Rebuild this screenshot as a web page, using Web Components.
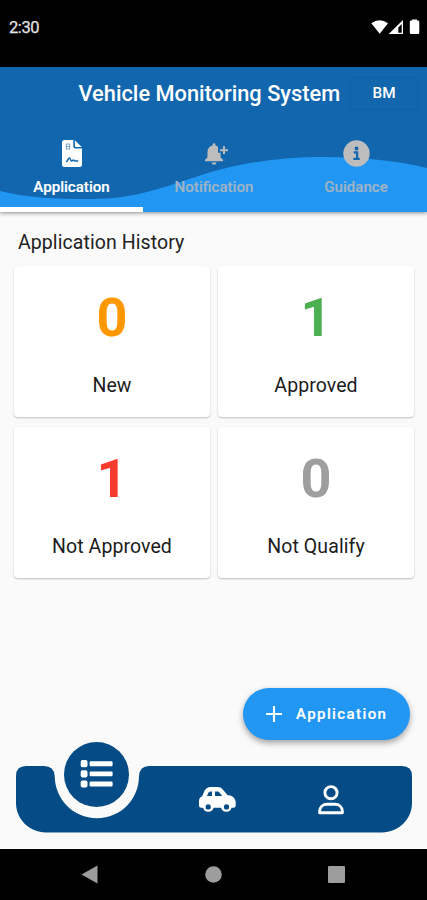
<!DOCTYPE html>
<html lang="en">
<head>
<meta charset="utf-8">
<meta name="viewport" content="width=device-width, initial-scale=1">
<title>Vehicle Monitoring System</title>
<style>
  html, body {
    margin: 0;
    height: 100%;
  }

  body {
    background: #fafafa;
    font-family: Roboto, sans-serif;
    overflow: hidden;
  }
</style>
</head>
<body>
<vms-app></vms-app>

<script>
const ICONS = {
  file: `<svg width="20" height="27" viewBox="0 0 20 27">
    <path fill="currentColor" fill-rule="evenodd" d="M2.5 0H11.3V6.6Q11.3 8.6 13.3 8.6H20V24.5Q20 27 17.5 27H2.5Q0 27 0 24.5V2.5Q0 0 2.5 0ZM12.9 0.3L19.7 7.1H13.9Q12.9 7.1 12.9 6.1Z"/>
    <path fill="none" stroke="#1166ae" stroke-opacity=".55" stroke-width="1" d="M4 4H8M4 6.5H8M4 9H8M4.3 4V9M7.7 4V9"/>
    <path fill="none" stroke="#1166ae" stroke-width="1.5" d="M4 21.7C6 21.5 6 18 7.4 18C8.8 18 8.3 21.3 9.7 21.1C10.9 20.9 11.2 19.5 12 20.2C12.8 21.2 14.2 21.1 16.3 21.1"/>
  </svg>`,
  bell: `<svg width="27" height="27" viewBox="-4 -2.6 27 27">
    <g transform="scale(.95 .91)">
      <path fill="currentColor" d="M8 2.2Q8 .8 9.5 .8T11 2.2V3.2C12.2 3.5 13 4 13.7 4.7V11.2H16.4V16.3L19 18.9V20.6H0V18.9L2.6 16.3V10.3C2.6 6.6 4.7 3.9 8 3.2ZM6.9 21.8H12.1Q11.7 24.4 9.5 24.4T6.9 21.8Z"/>
      <path fill="none" stroke="currentColor" stroke-width="2.2" d="M20 4.1V12.5M15.7 8.3H24.2"/>
    </g>
  </svg>`,
  info: `<svg width="27" height="27" viewBox="0 0 27 27">
    <circle cx="13.5" cy="13.5" r="13.2" fill="currentColor"/>
    <circle cx="13.5" cy="8.5" r="1.9" fill="#1166ae"/>
    <path fill="none" stroke="#1166ae" stroke-width="2.2" d="M10.8 12.3H14.1V18.8M10.4 18.9H16.7"/>
  </svg>`,
  plus: `<svg width="16" height="16" viewBox="0 0 16 16">
    <path stroke="currentColor" stroke-width="2.1" d="M8 0V16M0 8H16"/>
  </svg>`,
  list: `<svg width="33" height="28" viewBox="0 0 33 28">
    <g fill="currentColor">
      <rect x="0.7" y="0" width="6.8" height="7.2" rx="1.8"/>
      <rect x="0.7" y="10.2" width="6.8" height="7.2" rx="1.8"/>
      <rect x="0.7" y="20.4" width="6.8" height="7.2" rx="1.8"/>
      <rect x="9.6" y="1.3" width="23" height="4.9" rx="1.2"/>
      <rect x="9.6" y="11.4" width="23" height="4.9" rx="1.2"/>
      <rect x="9.6" y="21.5" width="23" height="4.9" rx="1.2"/>
    </g>
  </svg>`,
  car: `<svg width="37" height="26" viewBox="0 0 37 26">
    <path fill="currentColor" fill-rule="evenodd" d="M12 0H18.5Q21.8 0 23.6 2.2L28.6 8.2H29.5C33.8 8.6 36.7 11.8 36.7 15.2V18.7Q36.7 20.8 34.5 20.8H32.6A5.5 5.5 0 0 1 22 20.8H14.6A5.5 5.5 0 0 1 4 20.8H2.2Q0 20.8 0 18.7V14Q0 10.4 3.2 9.3L5.5 3.8Q7.3 0 12 0ZM8 9H13V4.5H11.4Q9.9 4.5 9.2 6ZM16 4.5V9H23.2L20 4.9Q19.6 4.5 19.1 4.5Z"/>
    <circle cx="9.2" cy="19.9" r="2.6" fill="#054c86"/>
    <circle cx="27.5" cy="19.9" r="2.6" fill="#054c86"/>
  </svg>`,
  person: `<svg width="26" height="30" viewBox="0 0 26 30">
    <g fill="none" stroke="currentColor" stroke-width="2.9">
      <circle cx="13" cy="7.7" r="6.1"/>
      <path stroke-linejoin="round" d="M1.6 27.7V26.4C1.6 22 5 19.3 9 19.3H17C21 19.3 24.4 22 24.4 26.4V27.7Z"/>
    </g>
  </svg>`
};

class VmsIcon extends HTMLElement {
  constructor() {
    super();
    this.attachShadow({ mode: 'open' });
  }

  connectedCallback() {
    this.shadowRoot.innerHTML = `
      <style>
        :host { display: inline-flex; }
        svg { display: block; }
      </style>
      ${ICONS[this.getAttribute('name')] || ''}
    `;
  }
}

class StatusBar extends HTMLElement {
  constructor() {
    super();
    this.attachShadow({ mode: 'open' });
    this.shadowRoot.innerHTML = `
      <style>
        :host {
          display: flex;
          justify-content: space-between;
          box-sizing: border-box;
          height: 67px;
          padding: 18px 6px 0 9px;
          background: #000;
          color: #e4e4e4;
          font-size: 16.5px;
          line-height: 20px;
          letter-spacing: -0.4px;
          -webkit-text-stroke: 0.25px #e4e4e4;
        }
        svg { display: block; margin-top: 1px; }
      </style>
      <slot></slot>
      <svg width="50" height="17" viewBox="0 0 50 17">
        <path fill="#fff" d="M0.3 4.3Q8.5 -2 17 4.3L8.7 14.8Z"/>
        <path fill="#fff" fill-rule="evenodd" d="M32 1V15H17.7ZM30.7 5L27.3 8.4V13.7H30.7Z"/>
        <path fill="#fff" d="M41 1.6V0.6H46V1.6H47Q48.3 1.6 48.3 3V13.5Q48.3 15 47 15H40.2Q38.8 15 38.8 13.5V3Q38.8 1.6 40.2 1.6Z"/>
      </svg>
    `;
  }
}

class AppHeader extends HTMLElement {
  constructor() {
    super();
    this.attachShadow({ mode: 'open' });
    this.shadowRoot.innerHTML = `
      <style>
        :host {
          display: grid;
          height: 145px;
          background: #2196f3;
          box-shadow: 0 1px 4px rgba(0, 0, 0, 0.45);
        }
        .wave, .content { grid-area: 1 / 1; }
        .wave { display: block; }
        .content {
          display: flex;
          flex-direction: column;
          justify-content: space-between;
          min-width: 0;
        }
        .bar {
          display: grid;
          grid-template-columns: 350px 68px;
          align-items: center;
          height: 52px;
        }
        .title {
          padding: 1px 0 0 78.5px;
          color: #fff;
          font-size: 21.8px;
          font-weight: 500;
          white-space: nowrap;
        }
        .user {
          box-sizing: border-box;
          height: 33px;
          border: 1px solid #0e60a5;
          border-radius: 3px;
          color: #fff;
          font-size: 15.3px;
          font-weight: 500;
          line-height: 31px;
          text-align: center;
        }
        .tabs {
          display: grid;
          grid-template-columns: 143px 142px 142px;
          height: 79px;
        }
      </style>
      <svg class="wave" width="427" height="145" viewBox="0 0 427 145">
        <path fill="#1166ae" d="M0 0H427V101C398 94 365 90 325 90C282 90 247 95 211 105C166 119 137 132 92 132C57 132 27 131 0 124Z"/>
      </svg>
      <div class="content">
        <div class="bar">
          <div class="title"><slot name="title"></slot></div>
          <div class="user"><slot name="user"></slot></div>
        </div>
        <div class="tabs"><slot></slot></div>
      </div>
    `;
  }
}

class HeaderTab extends HTMLElement {
  constructor() {
    super();
    this.attachShadow({ mode: 'open' });
  }

  connectedCallback() {
    this.shadowRoot.innerHTML = `
      <style>
        :host {
          display: flex;
          flex-direction: column;
          align-items: center;
          box-sizing: border-box;
          padding-top: 7px;
          border-bottom: 5px solid transparent;
          color: #bdbdbd;
          font-size: 15.1px;
          font-weight: 500;
          line-height: 18px;
        }
        :host([active]) {
          border-color: #fff;
          color: #fff;
        }
        .label {
          margin-top: 11px;
          -webkit-text-stroke: 0.2px currentColor;
        }
        :host(:not([active])) .label { color: #9fb3c6; }
      </style>
      <vms-icon name="${this.getAttribute('icon')}"></vms-icon>
      <div class="label"><slot></slot></div>
    `;
  }
}

class StatCard extends HTMLElement {
  constructor() {
    super();
    this.attachShadow({ mode: 'open' });
  }

  connectedCallback() {
    this.shadowRoot.innerHTML = `
      <style>
        :host {
          display: flex;
          flex-direction: column;
          align-items: center;
          box-sizing: border-box;
          padding-top: 21px;
          border-radius: 4px;
          background: #fff;
          box-shadow: 0 1px 2px rgba(0, 0, 0, 0.24);
        }
        .value {
          color: ${this.getAttribute('color')};
          font-size: 54px;
          font-weight: 700;
          line-height: 62px;
        }
        .label {
          margin-top: 25px;
          color: #1c1c1c;
          font-size: 19.5px;
          line-height: 24px;
          letter-spacing: 0.08px;
        }
      </style>
      <div class="value">${this.getAttribute('value')}</div>
      <div class="label"><slot></slot></div>
    `;
  }
}

class FloatingButton extends HTMLElement {
  constructor() {
    super();
    this.attachShadow({ mode: 'open' });
    this.shadowRoot.innerHTML = `
      <style>
        :host {
          display: flex;
          align-items: center;
          gap: 14.5px;
          box-sizing: border-box;
          width: 167px;
          height: 52px;
          padding-left: 22.5px;
          border-radius: 26px;
          background: #2196f3;
          box-shadow: 0 3px 6px rgba(0, 0, 0, 0.36);
          color: #fff;
          font-size: 15px;
          font-weight: 500;
          letter-spacing: 1.4px;
          -webkit-text-stroke: 0.2px #fff;
        }
      </style>
      <vms-icon name="plus"></vms-icon>
      <slot></slot>
    `;
  }
}

class BottomNav extends HTMLElement {
  constructor() {
    super();
    this.attachShadow({ mode: 'open' });
    this.shadowRoot.innerHTML = `
      <style>
        :host {
          display: grid;
          width: 396px;
          height: 91px;
          color: #fff;
        }
        .shape, .items { grid-area: 1 / 1; }
        .shape { display: block; }
        .items {
          display: grid;
          grid-template-columns: 144.5px 114px 114px;
          justify-items: center;
        }
        .active {
          display: flex;
          align-items: center;
          justify-content: center;
          box-sizing: border-box;
          width: 65px;
          height: 65px;
          margin-left: 17px;
          padding-bottom: 1px;
          border-radius: 50%;
          background: #054c86;
        }
        .car { margin-top: 45px; }
        .person { margin: 43px 1px 0 0; }
      </style>
      <svg class="shape" width="396" height="91" viewBox="0 0 396 91">
        <path fill="#054c86" d="M0 34Q0 24 10 24H28Q38 24 38.7 34C39 57 57 76.2 81 76.2S123 57 123 34Q123.7 24 133 24H386Q396 24 396 34V61C396 77 383 90.4 366 90.4H30C13 90.4 0 77 0 61Z"/>
      </svg>
      <div class="items">
        <div class="active"><vms-icon name="list"></vms-icon></div>
        <vms-icon class="car" name="car"></vms-icon>
        <vms-icon class="person" name="person"></vms-icon>
      </div>
    `;
  }
}

class SystemBar extends HTMLElement {
  constructor() {
    super();
    this.attachShadow({ mode: 'open' });
    this.shadowRoot.innerHTML = `
      <style>
        :host {
          display: flex;
          align-items: center;
          justify-content: space-between;
          box-sizing: border-box;
          height: 51px;
          padding: 0 82px 0 81px;
          background: #000;
        }
      </style>
      <svg width="17" height="19"><path fill="#9d9d9d" d="M0.5 9.5L16.5 0.5V18.5Z"/></svg>
      <svg width="17" height="17"><circle cx="8.5" cy="8.5" r="8.3" fill="#9d9d9d"/></svg>
      <svg width="17" height="17"><rect width="17" height="17" rx="1" fill="#9d9d9d"/></svg>
    `;
  }
}

class VmsApp extends HTMLElement {
  constructor() {
    super();
    this.attachShadow({ mode: 'open' });
    this.shadowRoot.innerHTML = `
      <style>
        :host {
          display: flex;
          flex-direction: column;
          width: 427px;
          height: 900px;
          background: #fafafa;
        }
        main {
          display: flex;
          flex: 1;
          flex-direction: column;
          padding: 18px 13px 16px 14px;
        }
        h2 {
          margin: 0 0 11px 4px;
          color: #222;
          font-size: 19.5px;
          font-weight: 400;
          line-height: 25px;
          letter-spacing: 0.08px;
        }
        .cards {
          display: grid;
          grid-template-columns: 196px 196px;
          grid-auto-rows: 150.5px;
          gap: 10.5px 8px;
        }
        floating-button {
          align-self: flex-end;
          margin: auto 4px 2px 0;
        }
        bottom-nav { margin-left: 2px; }
      </style>
      <status-bar>2:30</status-bar>
      <app-header>
        <span slot="title">Vehicle Monitoring System</span>
        <span slot="user">BM</span>
        <header-tab icon="file" active>Application</header-tab>
        <header-tab icon="bell">Notification</header-tab>
        <header-tab icon="info">Guidance</header-tab>
      </app-header>
      <main>
        <h2>Application History</h2>
        <div class="cards">
          <stat-card value="0" color="#ff9800">New</stat-card>
          <stat-card value="1" color="#4caf50">Approved</stat-card>
          <stat-card value="1" color="#f83a2c">Not Approved</stat-card>
          <stat-card value="0" color="#9e9e9e">Not Qualify</stat-card>
        </div>
        <floating-button>Application</floating-button>
        <bottom-nav></bottom-nav>
      </main>
      <system-bar></system-bar>
    `;
  }
}

customElements.define('vms-icon', VmsIcon);
customElements.define('status-bar', StatusBar);
customElements.define('app-header', AppHeader);
customElements.define('header-tab', HeaderTab);
customElements.define('stat-card', StatCard);
customElements.define('floating-button', FloatingButton);
customElements.define('bottom-nav', BottomNav);
customElements.define('system-bar', SystemBar);
customElements.define('vms-app', VmsApp);
</script>
</body>
</html>
